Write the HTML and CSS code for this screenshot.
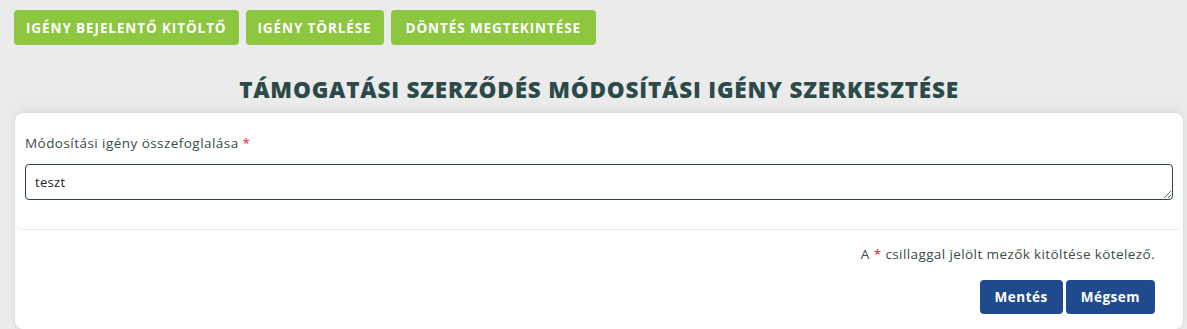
FILE: index.html
```html
<!DOCTYPE html>
<html lang="hu">
<head>
  <meta charset="UTF-8" />
  <meta name="viewport" content="width=device-width, initial-scale=1.0"/>
  <title>Módosítási igény szerkesztése</title>
  <link rel="stylesheet" href="styles.css">
</head>
<body>

  <div class="toolbar">
    <button type="button" class="btn-green">IGÉNY BEJELENTŐ KITÖLTŐ</button>
    <button type="button" class="btn-green">IGÉNY TÖRLÉSE</button>
    <button type="button" class="btn-green">DÖNTÉS MEGTEKINTÉSE</button>
  </div>

  <div class="page">
    <h1 class="page-title">TÁMOGATÁSI SZERZŐDÉS MÓDOSÍTÁSI IGÉNY SZERKESZTÉSE</h1>

    <form class="card">
      <div class="card-body">
        <label for="osszefoglalas">Módosítási igény összefoglalása <span class="req">*</span></label>
        <textarea id="osszefoglalas" rows="1">teszt</textarea>
      </div>

      <div class="card-footer">
        <p class="note">A <span class="req">*</span> csillaggal jelölt mezők kitöltése kötelező.</p>
        <div class="actions">
          <button type="submit" class="btn-blue">Mentés</button>
          <button type="button" class="btn-blue">Mégsem</button>
        </div>
      </div>
    </form>
  </div>

</body>
</html>
```

FILE: styles.css
```css
* {
  box-sizing: border-box;
  margin: 0;
  padding: 0;
}

body {
  font-family: 'Open Sans', sans-serif;
  background-color: #ebebeb;
  color: #3b4a4a;
}

.toolbar {
  display: flex;
  gap: 7px;
  padding: 10px 14px 0;
}

.btn-green {
  height: 35px;
  padding: 0 12px;
  background-color: #8dc63f;
  color: white;
  border: none;
  border-radius: 4px;
  font-family: inherit;
  font-size: 13.5px;
  font-weight: 700;
  letter-spacing: 0.9px;
  cursor: pointer;
}

.btn-green:last-child {
  padding: 0 15px;
}

.page {
  margin: 0 4px 0 15px;
}

.page-title {
  text-align: center;
  font-size: 22.5px;
  font-weight: 800;
  color: #2c4a4a;
  line-height: 28px;
  padding: 31px 0 9px;
  letter-spacing: 0.8px;
}

.card {
  background: white;
  border-radius: 8px;
  box-shadow: 0 -4px 10px rgba(0,0,0,0.06), 0 1px 3px rgba(0,0,0,0.08);
  height: 216px;
}

.card-body {
  padding: 21px 10px 29px;
  border-bottom: 1px solid #e8e8e8;
  border-radius: 8px;
}

.card-body label {
  display: block;
  font-size: 13.5px;
  letter-spacing: 0.45px;
  margin-bottom: 12px;
}

.req {
  color: #e3182d;
}

.card-body textarea {
  display: block;
  width: 100%;
  height: 36px;
  padding: 8px 9px;
  border: 1px solid #2c4545;
  border-radius: 4px;
  font-family: inherit;
  font-size: 13px;
  letter-spacing: 0.3px;
  color: #222;
  resize: vertical;
}

.card-footer {
  padding: 15px 28px 0;
  text-align: right;
}

.note {
  font-size: 13.5px;
  letter-spacing: 0.4px;
}

.actions {
  display: flex;
  justify-content: flex-end;
  gap: 3px;
  margin-top: 17px;
}

.btn-blue {
  height: 34px;
  padding: 0 15px;
  background-color: #1f4b8e;
  color: white;
  border: none;
  border-radius: 4px;
  font-family: inherit;
  font-size: 13.5px;
  font-weight: 700;
  letter-spacing: 0.5px;
  cursor: pointer;
}
```
